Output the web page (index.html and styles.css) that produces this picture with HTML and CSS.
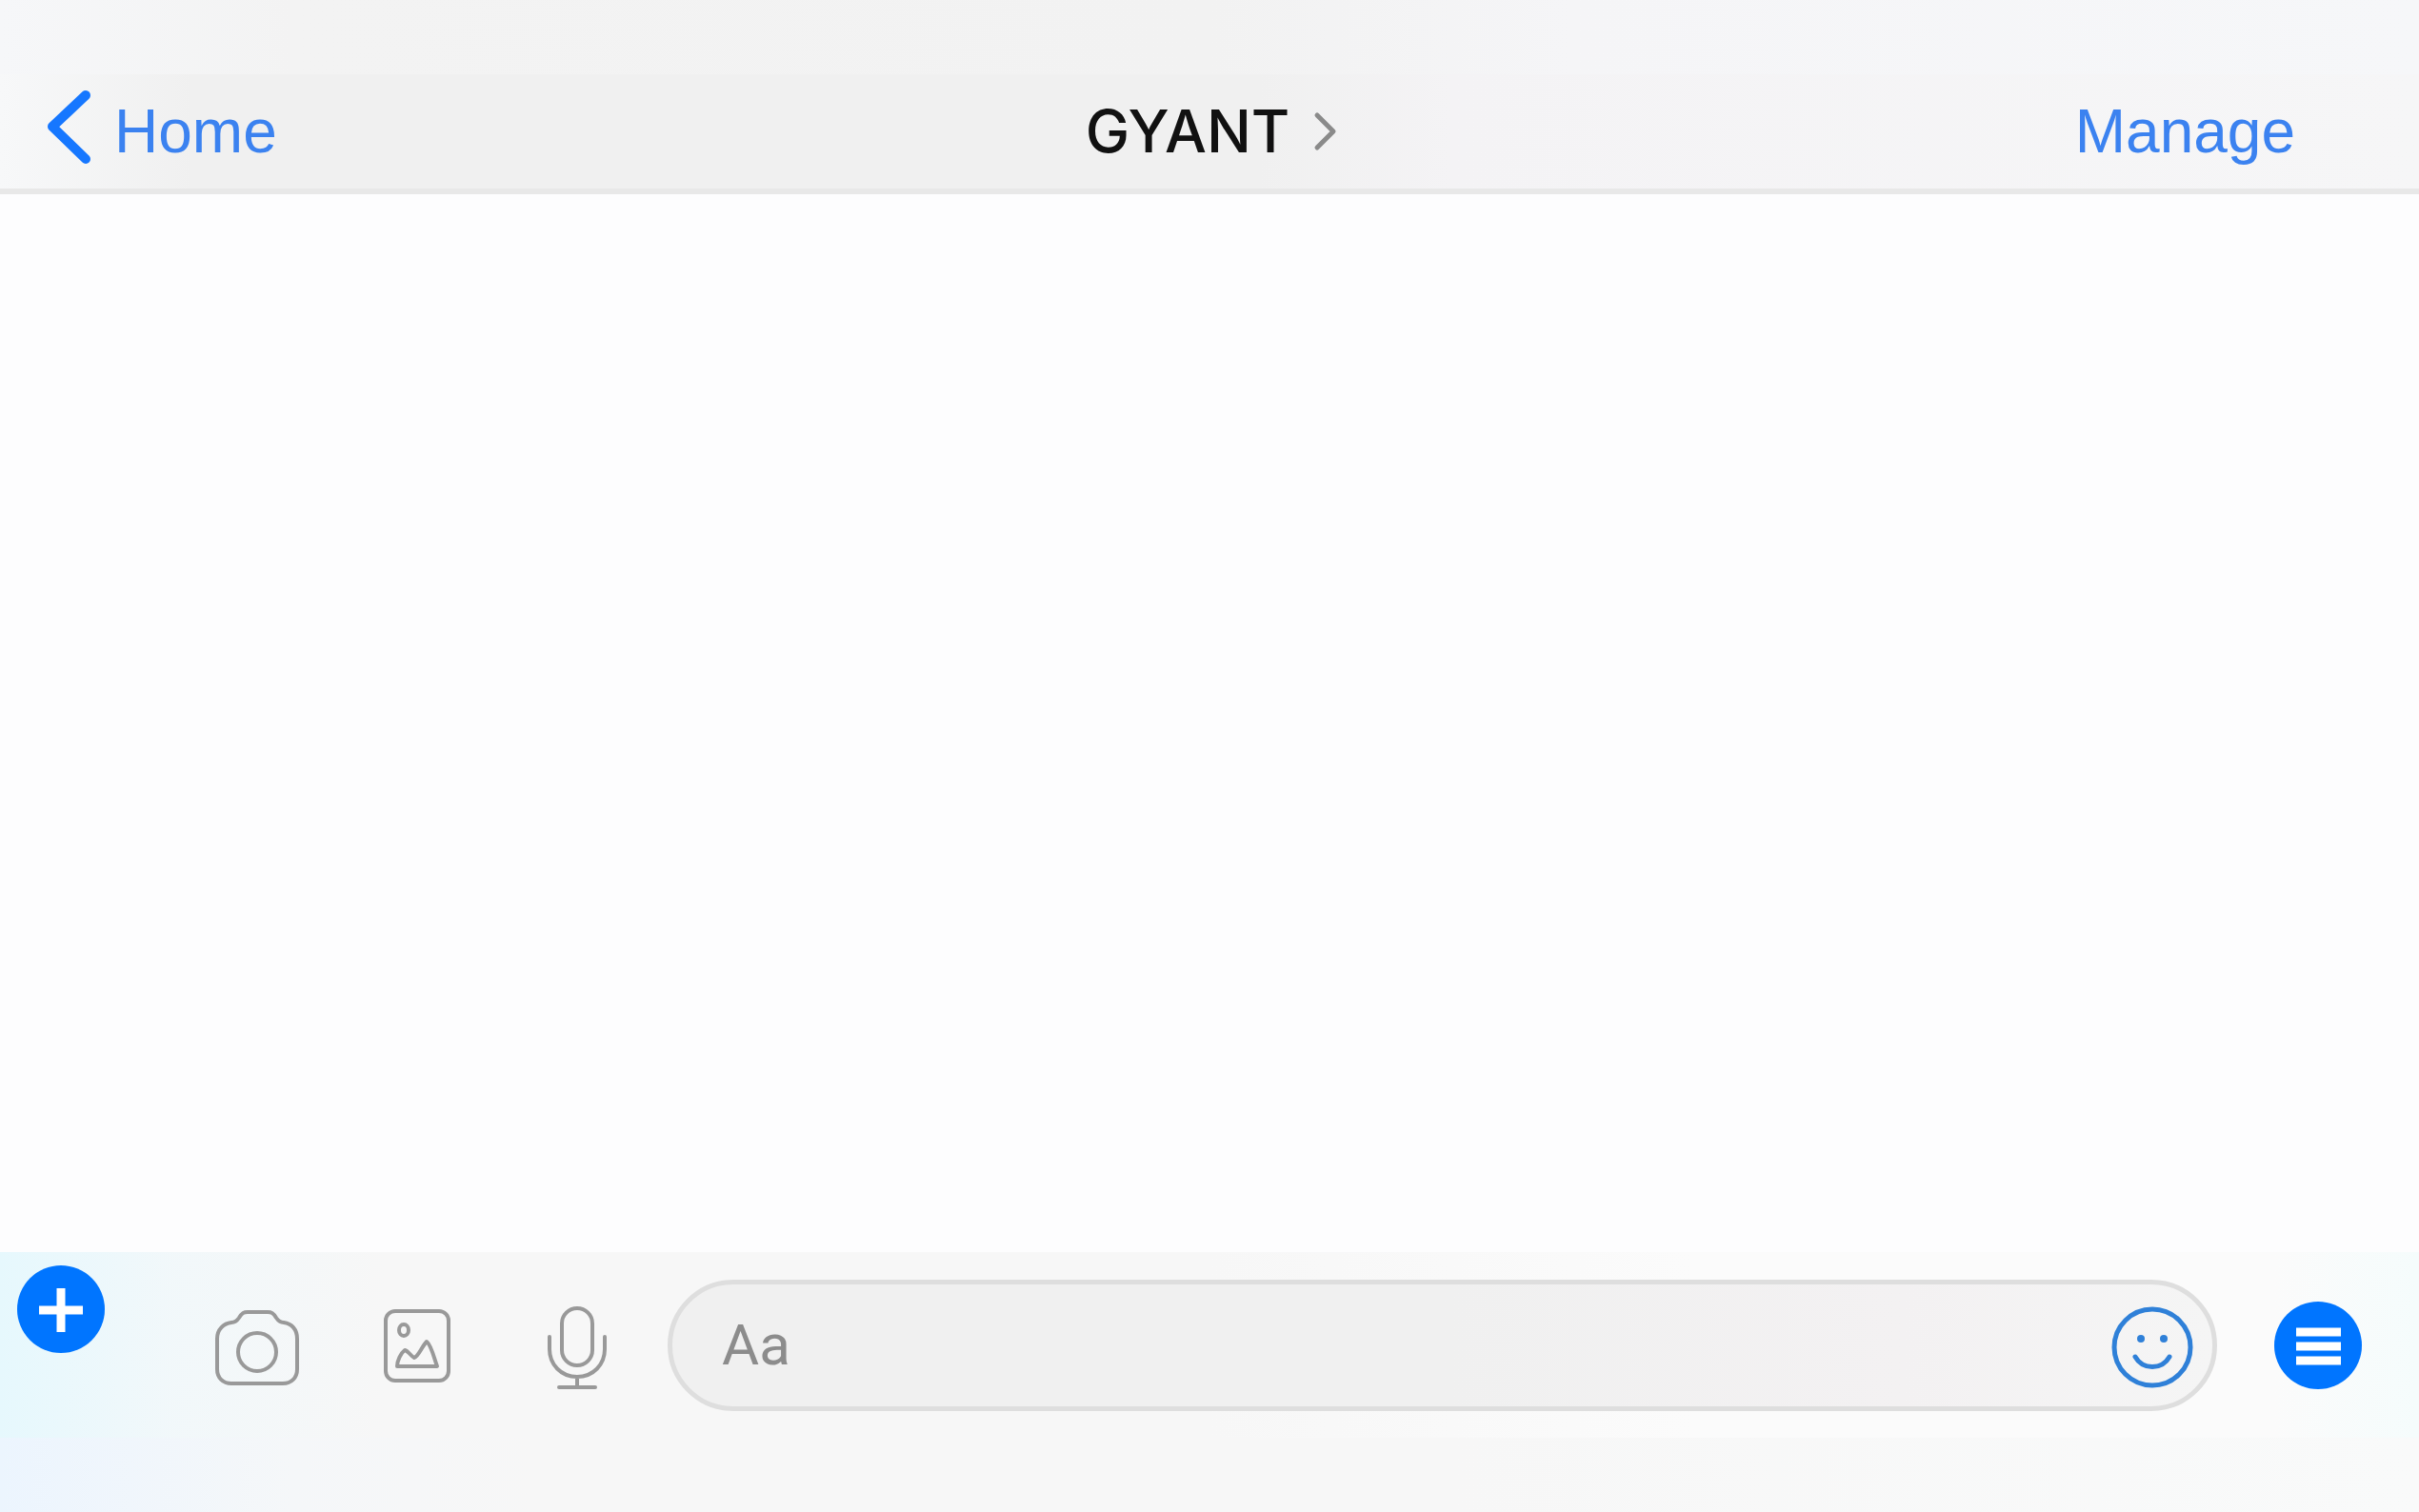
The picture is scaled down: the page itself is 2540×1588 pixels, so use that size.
FILE: index.html
```html
<!DOCTYPE html>
<html lang="en">
<head>
    <meta charset="UTF-8">
    <meta name="viewport" content="width=device-width, initial-scale=1.0">
    <title>GYANT</title>
    <link rel="stylesheet" href="styles.css">
</head>
<body>
    <div class="status-bar"></div>

    <header class="header">
        <a class="back" href="#home">
            <svg width="48" height="80" viewBox="0 0 48 80" aria-hidden="true">
                <path d="M42 2 L7 35 L42 69"/>
            </svg>
            <span>Home</span>
        </a>
        <button type="button" class="title">
            <span>GYANT</span>
            <svg width="26" height="44" viewBox="0 0 26 44" aria-hidden="true">
                <path d="M5 5 L22 22 L5 39"/>
            </svg>
        </button>
        <a class="manage" href="#manage">Manage</a>
    </header>

    <main class="chat"></main>

    <form class="composer">
        <button type="button" class="round add" aria-label="Add">
            <svg width="92" height="92" viewBox="0 0 92 92">
                <path d="M23 47 H69 M46 24 V70"/>
            </svg>
        </button>
        <div class="tools">
            <button type="button" class="tool" aria-label="Camera">
                <svg width="96" height="96" viewBox="0 0 96 96">
                    <path d="M21 88 C12 88 6 82 6 73 V41 C6 31 13 25 21 24 C25 24 27 22 29 19 C32 14 34 13 38 13 H59 C63 13 65 14 68 19 C70 22 72 24 76 24 C84 25 90 31 90 41 V73 C90 82 84 88 75 88 Z"/>
                    <circle cx="48" cy="55" r="20"/>
                </svg>
            </button>
            <button type="button" class="tool" aria-label="Photo">
                <svg width="96" height="96" viewBox="0 0 96 96">
                    <rect x="15" y="12" width="66" height="73" rx="10"/>
                    <ellipse cx="34" cy="32" rx="5" ry="6"/>
                    <path d="M27 70 C27 64 31 56 35 53 C39 54 42 60 45 61 C50 59 53 49 58 44 C63 48 66 62 69 70 Z"/>
                </svg>
            </button>
            <button type="button" class="tool" aria-label="Voice">
                <svg width="96" height="96" viewBox="0 0 96 96">
                    <rect x="32" y="9" width="32" height="60" rx="16"/>
                    <path d="M19 39 V52 C19 68 31 81 48 81 C65 81 77 68 77 52 V39 M48 81 V92 M29 92 H67"/>
                </svg>
            </button>
        </div>
        <div class="field">
            <input type="text" placeholder="Aa" aria-label="Message">
            <button type="button" class="emoji" aria-label="Emoji">
                <svg width="88" height="88" viewBox="0 0 88 88">
                    <circle class="line" cx="44" cy="46" r="40"/>
                    <circle class="eye" cx="32" cy="37" r="4"/>
                    <circle class="eye" cx="56" cy="37" r="4"/>
                    <path class="line" d="M26 56 C34 70 54 70 62 56"/>
                </svg>
            </button>
        </div>
        <button type="button" class="round menu" aria-label="Menu">
            <svg width="92" height="92" viewBox="0 0 92 92">
                <path d="M23 32 H70 M23 47 H70 M23 62 H70"/>
            </svg>
        </button>
    </form>

    <div class="home-bar"></div>
</body>
</html>
```

FILE: styles.css
```css
* {
    box-sizing: border-box;
}

body {
    display: flex;
    flex-direction: column;
    min-height: 100vh;
    margin: 0;
    background-color: #fdfdfe;
    font-family: "Liberation Sans", Arial, sans-serif;
    font-size: 64px;
    line-height: 72px;
}

button {
    padding: 0;
    border: none;
    background: none;
    cursor: pointer;
}

svg {
    display: block;
    overflow: visible;
    fill: none;
    stroke-linecap: round;
    stroke-linejoin: round;
}

.status-bar {
    height: 78px;
    background: linear-gradient(to right, #f6f7f9, #f3f3f3 12%, #f2f2f2 50%, #f5f5f7 65%, #f6f7f9);
}

/* header */

.header {
    display: grid;
    grid-template-columns: 1fr auto 1fr;
    align-items: center;
    height: 126px;
    padding: 0 130px 0 48px;
    border-bottom: 6px solid #e8e8e8;
    background: linear-gradient(to right, #f7f8f9, #f0f0f0 8%, #f0f0f0 52%, #f4f3f5 60%, #f6f6f7);
}

.back,
.manage {
    color: #3b82f0;
    text-decoration: none;
}

.back {
    display: flex;
    align-items: center;
    gap: 24px;
    justify-self: start;
}

.back svg {
    stroke: #1677ff;
    stroke-width: 10;
}

.title {
    display: flex;
    align-items: center;
    gap: 24px;
    margin-left: 86px;
    color: #111;
    font-family: Inter, sans-serif;
    font-size: 62px;
    font-weight: 500;
    line-height: 72px;
}

.title svg {
    stroke: #8a8a8a;
    stroke-width: 5;
}

.manage {
    justify-self: end;
}

.chat {
    flex: 1;
}

/* composer */

.composer {
    display: flex;
    align-items: center;
    padding: 29px 60px 28px 18px;
    background:
        linear-gradient(to right, #e6f8fd, rgba(240, 248, 251, 0.8) 7%, rgba(247, 247, 247, 0) 16%),
        linear-gradient(to right, #f7f7f7 50%, #fbfbfb 70%, #fbfbfb 94%, #f5fcfc);
}

.round {
    flex: none;
    border-radius: 50%;
    background-color: #0075ff;
}

.round svg {
    stroke: #fff;
    stroke-width: 9;
    stroke-linecap: butt;
}

.add {
    align-self: flex-start;
    margin-top: -15px;
}

.tools {
    display: flex;
    gap: 72px;
    margin: 0 47px 0 112px;
}

.tool svg {
    stroke: #999;
    stroke-width: 4;
}

.field {
    display: flex;
    flex: 1;
    align-items: center;
    height: 138px;
    margin-right: 60px;
    padding: 0 19px 0 52px;
    border: 5px solid #dedede;
    border-radius: 69px;
    background: linear-gradient(to right, #f0f0f0 50%, #f3f1f2 80%, #f5f5f5);
}

.field input {
    flex: 1;
    min-width: 0;
    padding: 0;
    border: none;
    outline: none;
    background: none;
    color: #222;
    font-family: Roboto, sans-serif;
    font-size: 60px;
    line-height: 72px;
}

.field input::placeholder {
    color: #8c8c8c;
}

.emoji .line {
    stroke: #2f80d8;
    stroke-width: 5;
}

.emoji .eye {
    fill: #2f80d8;
}

.home-bar {
    height: 78px;
    background: linear-gradient(to right, #ecf5fe, #f5f7f9 12%, #f7f7f7 22%, #f7f7f7 60%, #f9fafa);
}
```
